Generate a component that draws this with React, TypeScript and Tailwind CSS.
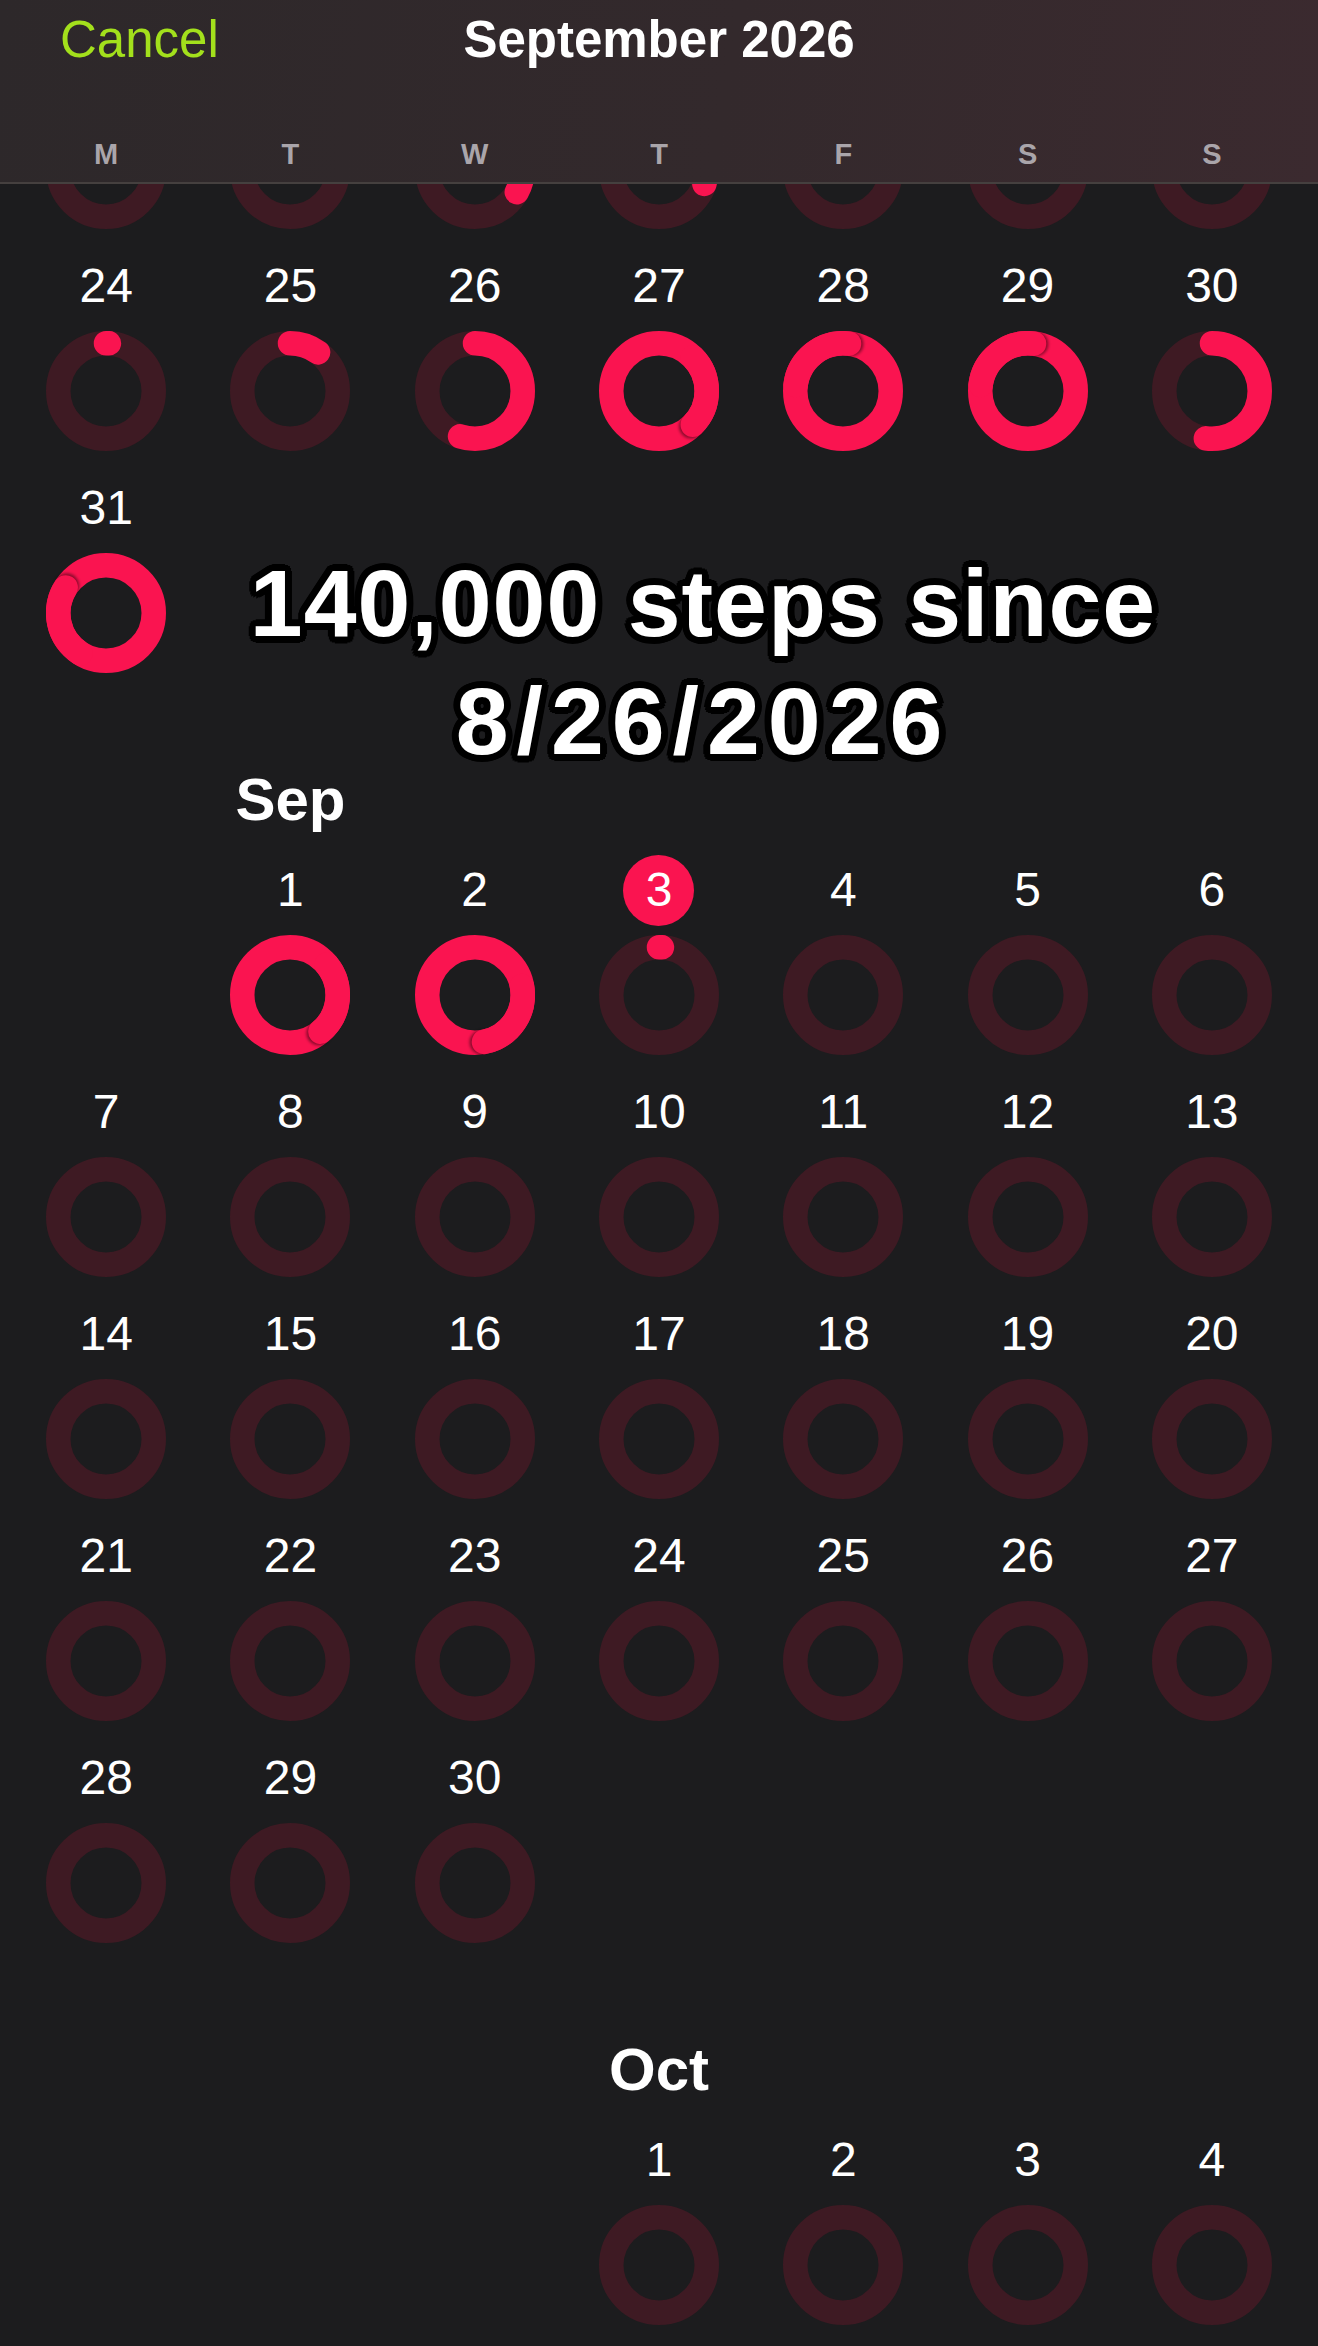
import React, { useId } from 'react';

const RED = '#fa1450';
const TRACK = '#3e1a23';

function Ring({ p }: { p: number }) {
  const uid = useId().replace(/[^a-zA-Z0-9]/g, '');
  const size = 120;
  const sw = 24.5;
  const r = (size - sw) / 2;
  const c = size / 2;
  const C = 2 * Math.PI * r;
  const pt = (a: number) => [c + r * Math.sin(a), c - r * Math.cos(a)];

  if (p <= 0) {
    return (
      <svg width={size} height={size} viewBox={`0 0 ${size} ${size}`}>
        <circle cx={c} cy={c} r={r} fill="none" stroke={TRACK} strokeWidth={sw} />
      </svg>
    );
  }
  if (p <= 1) {
    const len = Math.max(p * C, 0.01);
    return (
      <svg width={size} height={size} viewBox={`0 0 ${size} ${size}`}>
        <circle cx={c} cy={c} r={r} fill="none" stroke={TRACK} strokeWidth={sw} />
        <circle
          cx={c}
          cy={c}
          r={r}
          fill="none"
          stroke={RED}
          strokeWidth={sw}
          strokeLinecap="round"
          strokeDasharray={`${len} ${C}`}
          transform={`rotate(-90 ${c} ${c})`}
        />
      </svg>
    );
  }
  const end = (p % 1) * Math.PI * 2;
  const start = end - Math.PI * 0.5;
  const [sx, sy] = pt(start);
  const [ex, ey] = pt(end);
  const tx = Math.cos(end);
  const ty = Math.sin(end);
  return (
    <svg width={size} height={size} viewBox={`0 0 ${size} ${size}`}>
      <defs>
        <filter id={`sh${uid}`} x="-50%" y="-50%" width="200%" height="200%">
          <feGaussianBlur stdDeviation="1.6" />
        </filter>
      </defs>
      <circle cx={c} cy={c} r={r} fill="none" stroke={RED} strokeWidth={sw} />
      <circle
        cx={ex + tx * 2.2}
        cy={ey + ty * 2.2}
        r={sw / 2}
        fill="#000"
        opacity={0.45}
        filter={`url(#sh${uid})`}
      />
      <path
        d={`M ${sx} ${sy} A ${r} ${r} 0 0 1 ${ex} ${ey}`}
        fill="none"
        stroke={RED}
        strokeWidth={sw}
        strokeLinecap="round"
      />
    </svg>
  );
}

type Day = { d: number; p: number; today?: boolean; hidden?: boolean } | null;

function Cell({ day }: { day: Day }) {
  if (!day) return <div />;
  return (
    <div className="flex flex-col items-center">
      <div className="flex h-[56px] items-center justify-center text-[48px] leading-[56px] text-white">
        {day.hidden ? null : day.today ? (
          <span className="flex h-[71px] w-[71px] shrink-0 items-center justify-center rounded-full bg-[#fa1450]">
            {day.d}
          </span>
        ) : (
          <span>{day.d}</span>
        )}
      </div>
      <div className="mt-[17px]">
        <Ring p={day.p} />
      </div>
    </div>
  );
}

function Week({ days }: { days: Day[] }) {
  return (
    <div className="grid grid-cols-7 pb-[29px]">
      {days.map((d, i) => (
        <Cell key={i} day={d} />
      ))}
    </div>
  );
}

function MonthLabel({ name, col }: { name: string; col: 'col-start-2' | 'col-start-4' }) {
  return (
    <div className="grid grid-cols-7 pt-[64px] pb-[28px]">
      <div className={`${col} flex h-[68px] items-center justify-center text-[60px] font-bold leading-[68px] text-white`}>
        {name}
      </div>
    </div>
  );
}

const mk = (d: number, p = 0, today = false): Day => ({ d, p, today });
const hid = (d: number, p = 0): Day => ({ d, p, hidden: true });

export default function App() {
  const aug1: Day[] = [hid(17), hid(18), hid(19, 0.33), hid(20, 0.3), hid(21), hid(22), hid(23)];
  const aug2: Day[] = [mk(24, 0.01), mk(25, 0.1), mk(26, 0.55), mk(27, 1.375), mk(28, 1.02), mk(29, 1.02), mk(30, 0.52)];
  const aug3: Day[] = [mk(31, 1.84), null, null, null, null, null, null];
  const sep1: Day[] = [null, mk(1, 1.39), mk(2, 1.47), mk(3, 0.01, true), mk(4), mk(5), mk(6)];
  const sepRows: Day[][] = [
    sep1,
    [7, 8, 9, 10, 11, 12, 13].map((d) => mk(d)),
    [14, 15, 16, 17, 18, 19, 20].map((d) => mk(d)),
    [21, 22, 23, 24, 25, 26, 27].map((d) => mk(d)),
    [mk(28), mk(29), mk(30), null, null, null, null],
  ];
  const oct1: Day[] = [null, null, null, mk(1), mk(2), mk(3), mk(4)];

  const outline =
    '[text-shadow:7px_0_0_#000,-7px_0_0_#000,0_7px_0_#000,0_-7px_0_#000,5px_5px_0_#000,-5px_5px_0_#000,5px_-5px_0_#000,-5px_-5px_0_#000,6px_3px_0_#000,-6px_3px_0_#000,6px_-3px_0_#000,-6px_-3px_0_#000,3px_6px_0_#000,-3px_6px_0_#000,3px_-6px_0_#000,-3px_-6px_0_#000,0_0_4px_#000]';

  return (
    <div className="relative h-[2346px] w-[1318px] overflow-hidden bg-[#1c1c1e] font-['Liberation_Sans',Arial,sans-serif]">
      {/* scrolling calendar content */}
      <div className="px-[14px] pt-[36px]">
        <Week days={aug1} />
        <Week days={aug2} />
        <Week days={aug3} />
        <MonthLabel name="Sep" col="col-start-2" />
        {sepRows.map((w, i) => (
          <Week key={i} days={w} />
        ))}
        <MonthLabel name="Oct" col="col-start-4" />
        <Week days={oct1} />
      </div>

      {/* header overlay */}
      <div className="absolute inset-x-0 top-0 z-10 h-[184px] border-b-2 border-[#45403f] bg-[linear-gradient(100deg,#2d282a_0%,#33292c_55%,#3b2a2f_100%)]">
        <div className="grid h-[80px] grid-cols-[1fr_auto_1fr] items-center">
          <div className="pl-[60px] text-[51px] text-[#a3e01c]">Cancel</div>
          <div className="text-[51px] font-bold text-white">September 2026</div>
          <div />
        </div>
        <div className="mt-[55px] grid grid-cols-7 px-[14px]">
          {['M', 'T', 'W', 'T', 'F', 'S', 'S'].map((w, i) => (
            <div key={i} className="flex h-[40px] items-center justify-center text-[29px] font-semibold text-[#aaa5aa]">
              {w}
            </div>
          ))}
        </div>
      </div>

      {/* caption overlay */}
      <div
        className={`absolute left-0 top-[544px] z-20 w-full pl-[88px] text-center text-[95px] font-bold leading-[118px] text-white ${outline}`}
      >
        <div className="tracking-[1px]">140,000 steps since</div>
        <div className="tracking-[8px]">8/26/2026</div>
      </div>
    </div>
  );
}
